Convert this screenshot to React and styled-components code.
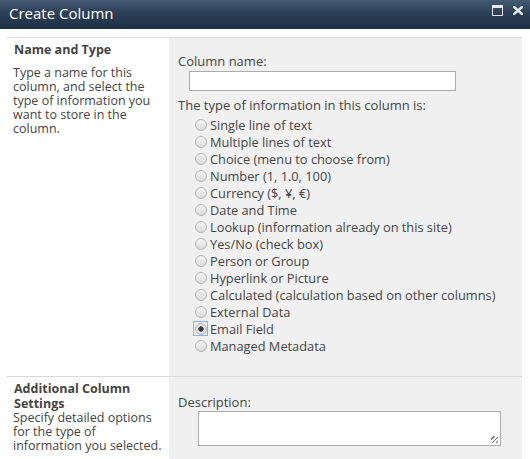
import React from "react"
import styled, { createGlobalStyle } from "styled-components"

const GlobalStyle = createGlobalStyle`
  html, body {
    margin: 0;
    padding: 0;
    background: #fff;
    overflow: hidden;
  }
  body {
    font-family: "Open Sans", "Liberation Sans", sans-serif;
    color: #444;
  }
`

const columnTypes = [
    "Single line of text",
    "Multiple lines of text",
    "Choice (menu to choose from)",
    "Number (1, 1.0, 100)",
    "Currency ($, ¥, €)",
    "Date and Time",
    "Lookup (information already on this site)",
    "Yes/No (check box)",
    "Person or Group",
    "Hyperlink or Picture",
    "Calculated (calculation based on other columns)",
    "External Data",
    "Email Field",
    "Managed Metadata",
]

const App = () => {
    return (
        <>
            <GlobalStyle />
            <TitleBar>
                <Title>Create Column</Title>
                <TitleButtons>
                    <svg width="11" height="11" viewBox="0 0 11 11">
                        <rect x="0.5" y="0.5" width="10" height="10" fill="none" stroke="#e4e8ec" strokeWidth="1" />
                        <rect x="1" y="1" width="9" height="2" fill="#e4e8ec" />
                    </svg>
                    <svg width="10" height="9" viewBox="0 0 10 9">
                        <path d="M1 1 L9 8 M9 1 L1 8" stroke="#e4e8ec" strokeWidth="2.4" strokeLinecap="square" />
                    </svg>
                </TitleButtons>
            </TitleBar>
            <Body>
                <Section>
                    <InfoCell>
                        <Heading>Name and Type</Heading>
                        <Description>Type a name for this column, and select the type of information you want to store in the column.</Description>
                    </InfoCell>
                    <FieldCell $top={15} $bottom={22}>
                        <Label>Column name:</Label>
                        <TextInput type="text" />
                        <Label $top={6}>The type of information in this column is:</Label>
                        <RadioList>
                            {columnTypes.map(type => (
                                <RadioRow key={type}>
                                    <RadioBox $focused={type === "Email Field"}>
                                        <Radio $checked={type === "Email Field"} />
                                    </RadioBox>
                                    {type}
                                </RadioRow>
                            ))}
                        </RadioList>
                    </FieldCell>
                </Section>
                <Section>
                    <InfoCell>
                        <Heading $tight>Additional Column Settings</Heading>
                        <Description $top={0}>Specify detailed options for the type of information you selected.</Description>
                    </InfoCell>
                    <FieldCell $top={17} $bottom={10}>
                        <Label>Description:</Label>
                        <TextArea />
                        <SubLabel>Require that this column contains information:</SubLabel>
                    </FieldCell>
                </Section>
            </Body>
        </>
    )
}

const TitleBar = styled.div`
    display: flex;
    align-items: center;
    justify-content: space-between;
    height: 29px;
    padding: 0 7px 0 9px;
    background: linear-gradient(180deg, #435a72 0%, #2b3f56 45%, #1d3046 100%);
    box-sizing: border-box;
`

const Title = styled.div`
    font-family: "Open Sans", "Liberation Sans", sans-serif;
    font-size: 15px;
    color: #fff;
    margin-top: -3px;
`

const TitleButtons = styled.div`
    display: flex;
    align-items: center;
    gap: 10px;
    margin-top: -9px;
`

const Body = styled.div`
    padding: 8px 8px 0 7px;
`

const Section = styled.div`
    display: grid;
    grid-template-columns: 162px 1fr;
    border-top: 1px solid #d9d9d9;
`

const InfoCell = styled.div`
    padding: 4px 6px 0 6px;
`

const Heading = styled.div`
    font-size: 12.5px;
    font-weight: 700;
    line-height: ${props => props.$tight ? "15px" : "16px"};
    color: #444;
    padding-left: 1px;
`

const Description = styled.div`
    margin-top: ${props => props.$top ?? 8}px;
    font-size: 12.5px;
    line-height: 14px;
    color: #444;
`

const FieldCell = styled.div`
    background: #f0f0f0;
    padding: ${props => props.$top}px 8px ${props => props.$bottom}px 9px;
`

const Label = styled.div`
    font-size: 13px;
    line-height: 16px;
    margin-top: ${props => props.$top ?? 0}px;
    color: #444;
`

const TextInput = styled.input`
    display: block;
    box-sizing: border-box;
    width: 267px;
    height: 20px;
    margin: 2px 0 0 11px;
    border: 1px solid #ababab;
    background: #fff;
    padding: 0;
    outline: none;
`

const RadioList = styled.div`
    display: flex;
    flex-direction: column;
    margin-top: 3px;
    padding-left: 15px;
`

const RadioRow = styled.div`
    display: flex;
    align-items: center;
    height: 17px;
    font-size: 12.8px;
    color: #444;
    white-space: nowrap;
`

const RadioBox = styled.div`
    display: flex;
    align-items: center;
    justify-content: center;
    width: 15px;
    height: 15px;
    margin-right: 2px;
    box-sizing: border-box;
    border: 1px solid ${props => props.$focused ? "#8ab4ea" : "transparent"};
`

const Radio = styled.div`
    width: 12px;
    height: 12px;
    border-radius: 50%;
    box-sizing: border-box;
    border: 1px solid #b4b4b4;
    background: ${props => props.$checked
        ? "radial-gradient(circle, #3a3a3a 0 2px, #555 2.5px, #e6e6e6 3px, #d8d8d8 100%)"
        : "linear-gradient(180deg, #f6f6f6, #dadada)"};
`

const TextArea = styled.div`
    box-sizing: border-box;
    width: 303px;
    height: 35px;
    margin: 1px 0 0 20px;
    border: 1px solid #ababab;
    background: #fff;
    position: relative;

    &::after {
        content: "";
        position: absolute;
        right: 2px;
        bottom: 2px;
        width: 7px;
        height: 7px;
        background: repeating-linear-gradient(135deg, transparent 0 2px, #777 2px 3px);
    }
`

const SubLabel = styled.div`
    margin: 12px 0 0 30px;
    font-size: 13px;
    line-height: 16px;
    color: #444;
    white-space: nowrap;
`

export default App
